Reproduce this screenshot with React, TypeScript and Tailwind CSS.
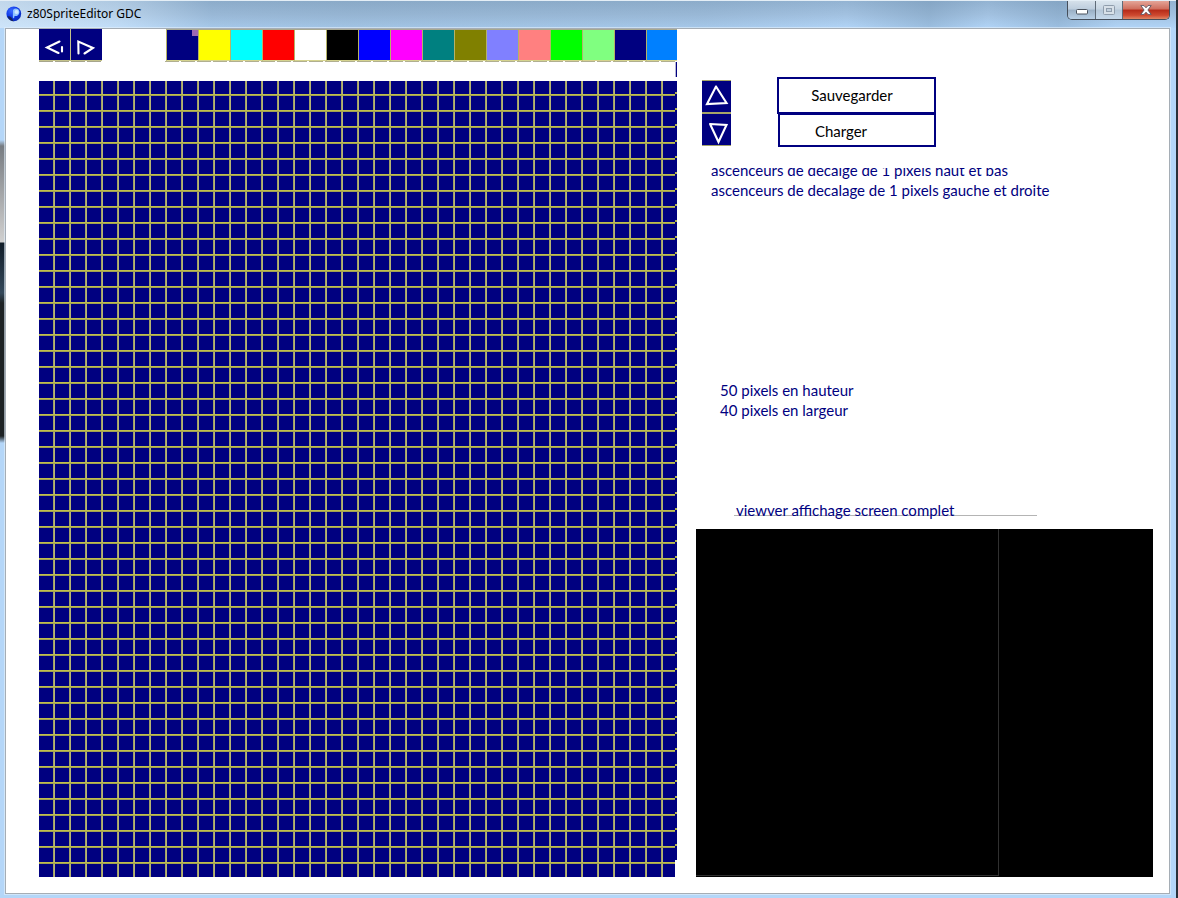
import React from "react";

const swatches = [
  { name: "Bleu nuit", color: "bg-[#000080]" },
  { name: "Jaune", color: "bg-[#ffff00]" },
  { name: "Cyan", color: "bg-[#00ffff]" },
  { name: "Rouge", color: "bg-[#ff0000]" },
  { name: "Blanc", color: "bg-white" },
  { name: "Noir", color: "bg-black" },
  { name: "Bleu", color: "bg-[#0000ff]" },
  { name: "Magenta", color: "bg-[#ff00ff]" },
  { name: "Sarcelle", color: "bg-[#008080]" },
  { name: "Olive", color: "bg-[#808000]" },
  { name: "Lavande", color: "bg-[#8080ff]" },
  { name: "Saumon", color: "bg-[#ff8080]" },
  { name: "Vert", color: "bg-[#00ff00]" },
  { name: "Vert clair", color: "bg-[#80ff80]" },
  { name: "Marine", color: "bg-[#000080]" },
  { name: "Azur", color: "bg-[#0080ff]" },
];

function AppIcon() {
  return (
    <svg viewBox="0 0 16 16" className="size-4 shrink-0" aria-hidden="true">
      <defs>
        <radialGradient id="ball" cx="0.35" cy="0.3" r="0.8">
          <stop offset="0" stopColor="#3b6cff" />
          <stop offset="0.55" stopColor="#0b35e6" />
          <stop offset="1" stopColor="#0a2bb0" />
        </radialGradient>
      </defs>
      <circle cx="7.8" cy="7.8" r="7.400" fill="url(#ball)" />
      <path d="M1.500 10.500 Q5 9 7.500 15.500 Q3 14.500 1.500 10.500Z" fill="#16245c" />
      <path d="M7 4 Q9.500 1.500 12.500 3.500 Q15 7 11 10 L8.500 10 L8 12.500 L6.800 11.500 Z" fill="#8fc4ff" />
      <circle cx="10.500" cy="6" r="2" fill="#cfe8ff" />
    </svg>
  );
}

function TitleBar() {
  return (
    <header className="flex h-7 items-start justify-between border-t border-[#e4eef6] bg-[linear-gradient(90deg,rgba(225,240,252,0.6)_0%,rgba(225,240,252,0.35)_10%,rgba(100,130,155,0.15)_18%,rgba(100,130,155,0.2)_30%,rgba(100,130,155,0.15)_60%,transparent_72%,rgba(90,125,155,0.25)_79%,transparent_84%,rgba(90,125,155,0.25)_90%,transparent_95%),linear-gradient(180deg,#93b3d2_0%,#a2c1e0_50%,#b1d4f7_100%)] pl-[6px] pr-[6px]">
      <div className="flex items-center gap-[5px] pt-[5px]">
        <AppIcon />
        <h1 className="font-['Noto_Sans',sans-serif] text-[12px] leading-4 text-black">
          z80SpriteEditor GDC
        </h1>
      </div>
      <div className="flex h-[19px] overflow-hidden rounded-b-[5px] border border-t-0 border-[#454e5a]">
        <button
          aria-label="Réduire"
          className="flex w-7 items-center justify-center border-r border-[#5f6b78] bg-[linear-gradient(180deg,#d5e0ea_0%,#bdcddd_45%,#9aafc4_50%,#b9d0e6_100%)]"
        >
          <svg viewBox="0 0 12 6" className="mt-1 h-[6px] w-3" aria-hidden="true">
            <rect x="0.500" y="0.500" width="11" height="4.500" rx="1" fill="#fff" stroke="#4b535e" />
          </svg>
        </button>
        <button
          aria-label="Agrandir"
          className="flex w-[27px] items-center justify-center border-r border-[#5f6b78] bg-[linear-gradient(180deg,#dae5ee_0%,#c7d5e2_45%,#b5c7d8_50%,#c6d9eb_100%)]"
        >
          <svg viewBox="0 0 12 10" className="h-[10px] w-3" aria-hidden="true">
            <rect x="0.500" y="0.500" width="11" height="9" rx="1" fill="#d7e0e8" stroke="#8f9dac" />
            <rect x="3.500" y="3.500" width="5" height="3" fill="#c1cfdc" stroke="#8f9dac" />
          </svg>
        </button>
        <button
          aria-label="Fermer"
          className="flex w-[46px] items-center justify-center bg-[linear-gradient(180deg,#e4a598_0%,#cf6d5c_45%,#b52a18_50%,#cf4a31_80%,#e08664_100%)]"
        >
          <svg viewBox="0 0 12 10" className="h-[10px] w-3" aria-hidden="true">
            <path
              d="M0.800 0.600H4L6 2.800L8 0.600H11.200L7.900 5L11.200 9.400H8L6 7.200L4 9.400H0.800L4.100 5Z"
              fill="#fff"
              stroke="#5a5562"
              strokeWidth="0.900"
            />
          </svg>
        </button>
      </div>
    </header>
  );
}

function ArrowButton({ label, box, path }: { label: string; box: string; path: string }) {
  return (
    <button aria-label={label} className={`${box} block bg-[#000080]`}>
      <svg
        viewBox="0 0 30 31"
        className="h-[31px] w-[30px]"
        fill="none"
        stroke="#fff"
        strokeWidth="2.100"
        strokeLinecap="round"
        aria-hidden="true"
      >
        <path d={path} />
      </svg>
    </button>
  );
}

function Toolbar() {
  return (
    <div className="flex justify-between">
      <div>
        <div className="flex">
          <ArrowButton
            label="Décaler à gauche"
            box="h-8 w-8 border-b border-r border-[#c4c28a]"
            path="M20.500 12.500L8 18.500L19.500 24M23 18V22.500"
          />
          <ArrowButton
            label="Décaler à droite"
            box="h-8 w-[31px] border-b border-[#c4c28a]"
            path="M7.500 24.500L7.300 12.500L22 19L13.500 24.500"
          />
        </div>
        <div className="h-px bg-[repeating-linear-gradient(90deg,#a6a58c_0px,#a6a58c_14px,#fff_14px,#fff_16px)]" />
      </div>
      <div>
        <div className="flex pl-px">
          {swatches.map((s, i) => (
            <button
              key={s.name}
              aria-label={s.name}
              className={`${s.color} flex h-8 w-8 justify-end border-b border-l border-t border-b-[#d5d38e] border-l-[#b4b268] border-t-[#a8a890] last:w-[31px]`}
            >
              {i === 0 && <span className="size-[6px] bg-[#9c68b4]" />}
            </button>
          ))}
        </div>
        <div className="h-px bg-[repeating-linear-gradient(90deg,#b0af90_0px,#b0af90_14px,#fff_14px,#fff_16px)]" />
      </div>
    </div>
  );
}

function PixelGrid() {
  return (
    <div role="img" aria-label="Grille de 40 sur 50 pixels" className="flex items-start">
      <div className="h-[796px] flex-1 bg-[#000080] bg-[linear-gradient(180deg,transparent_14px,#c0bf4c_14px,#c0bf4c_15px,#a2a152_15px),linear-gradient(90deg,transparent_14px,#a3a265_14px,#a3a265_15px,#b5b477_15px)] bg-[length:16px_16px] bg-[position:0_-1px]" />
      <div className="h-[779px] w-[2px] bg-[#000080] bg-[linear-gradient(180deg,transparent_14px,#b0af50_14px)] bg-[length:2px_16px] bg-[position:0_-3px]" />
    </div>
  );
}

function Editor() {
  return (
    <section aria-label="Éditeur" className="w-[638px] shrink-0">
      <Toolbar />
      <div className="flex h-[19px] justify-end">
        <div className="h-[15px] w-[2px] border-l border-[#b4b4d4] bg-[#000080]" />
      </div>
      <PixelGrid />
    </section>
  );
}

function SidePanel() {
  return (
    <aside className="flex min-w-0 flex-1 flex-col text-[15px] leading-5 text-[#000080]">
      <div className="flex gap-[46px] pl-[6px] pt-12">
        <div className="flex flex-col pt-[3px]">
          <ArrowButton
            label="Décaler vers le haut"
            box="h-[33px] w-[29px] border-b border-t border-[#a6a568]"
            path="M14 5.500L5 23L24.500 22L14 5.500"
          />
          <ArrowButton
            label="Décaler vers le bas"
            box="h-[33px] w-[29px] border-b border-t border-[#a6a568]"
            path="M8 10L24.500 11L16.500 28L8.500 11"
          />
        </div>
        <div className="flex w-[159px] flex-col text-black">
          <button className="h-[37px] border-2 border-[#000080] bg-white pb-[2px] pr-[9px] text-center">
            Sauvegarder
          </button>
          <button className="-mt-px ml-px h-[34px] border-2 border-[#000080] bg-white pr-8 pt-[2px] text-center">
            Charger
          </button>
        </div>
      </div>
      <div className="pl-[15px] pt-[13px]">
        <p className="relative whitespace-nowrap">
          ascenceurs de decalge de 1 pixels haut et bas
          <span className="absolute left-0 top-0 h-2 w-full bg-white" />
        </p>
        <p className="whitespace-nowrap">ascenceurs de decalage de 1 pixels gauche et droite</p>
      </div>
      <div className="pl-6 pt-[180px]">
        <p>50 pixels en hauteur</p>
        <p>40 pixels en largeur</p>
      </div>
      <div className="pl-[38px] pt-20">
        <h2 className="relative w-[303px] pl-[2px]">
          <span className="absolute left-0 top-[15px] h-px w-full bg-[#b4b4b4]" />
          <span className="relative">viewver affichage screen complet</span>
        </h2>
      </div>
      <div className="mt-[9px] flex h-[348px] bg-black" role="img" aria-label="Affichage complet">
        <div className="h-[347px] w-[303px] border-b border-r border-[#303030]" />
      </div>
    </aside>
  );
}

export default function App() {
  return (
    <div className="flex min-h-screen flex-col border-r-2 border-[#2a3038] bg-[#b4d6f8] font-['Lato','Liberation_Sans',sans-serif]">
      <TitleBar />
      <div className="flex flex-1 bg-[linear-gradient(180deg,#b4d6f8_0px,#b4d6f8_112px,#777c82_118px,#c4c4c4_200px,#d0d0d0_214px,#101c28_215px,#34485a_265px,#1d2224_275px,#1d2224_408px,#b4d6f8_415px)] bg-[length:5px_100%] bg-no-repeat pb-1 pl-[5px]">
        <main className="mr-[6px] flex flex-1 gap-[19px] border border-[#a5adb5] bg-white pb-[15px] pl-[33px] pr-4 outline-1 outline-[#e2f0fb]/60">
          <Editor />
          <SidePanel />
        </main>
      </div>
    </div>
  );
}
